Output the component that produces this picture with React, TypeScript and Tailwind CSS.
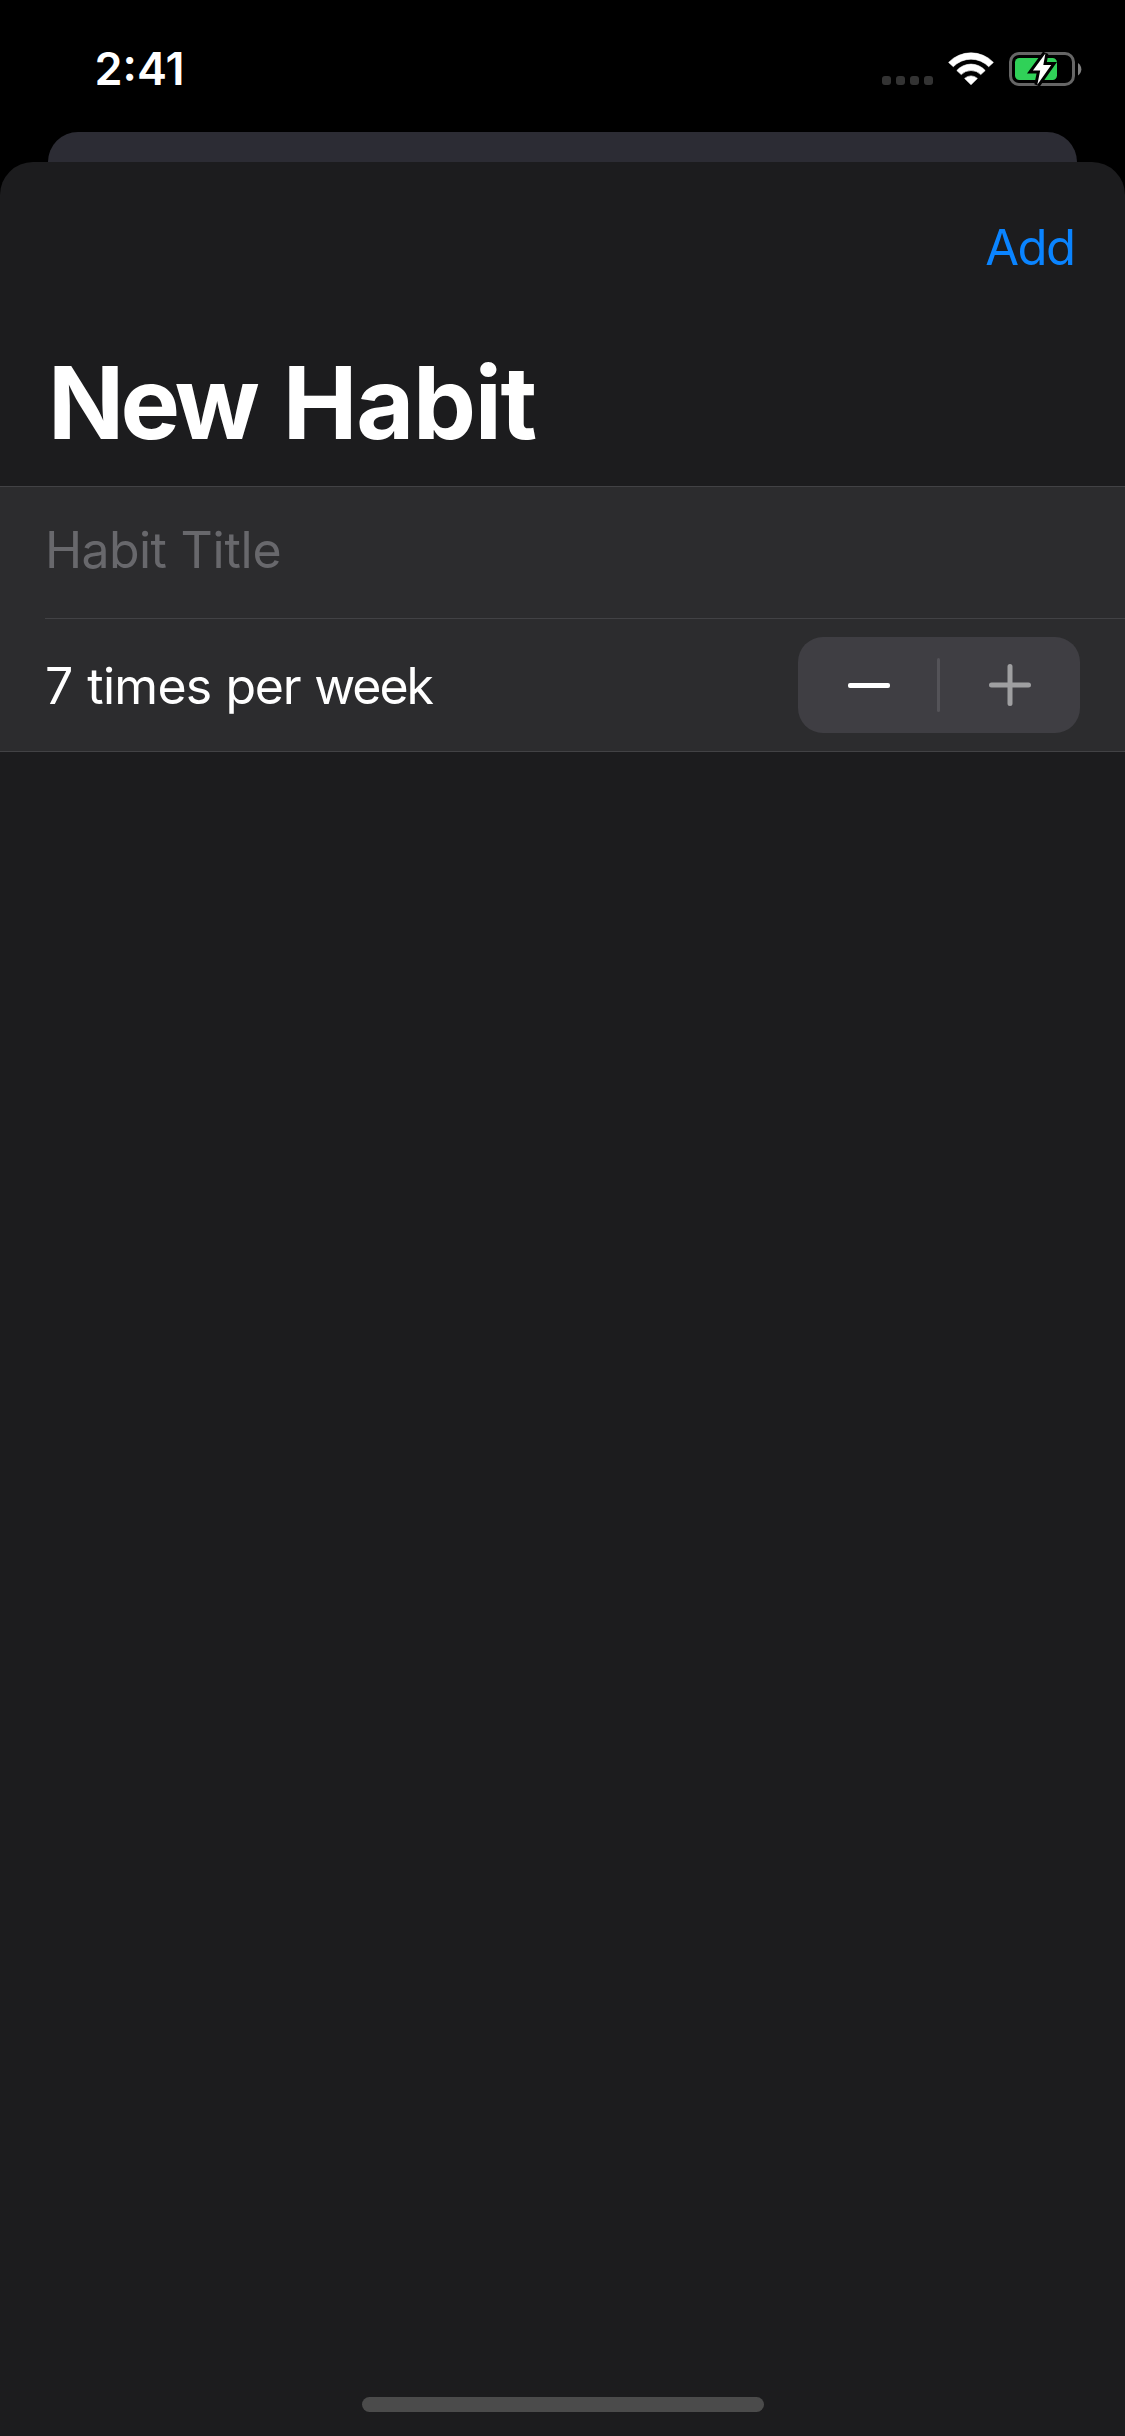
function SignalDots() {
  return (
    <div className="mt-[76px] flex gap-[5px]">
      {[0, 1, 2, 3].map((dot) => (
        <span key={dot} className="size-[9px] rounded-[3px] bg-[#333333]" />
      ))}
    </div>
  );
}

function WifiIcon() {
  return (
    <svg className="mt-[51px] ml-[14px]" width="48" height="36" viewBox="947 51 48 36" fill="white" stroke="white" strokeWidth="0.6" strokeLinejoin="round">
      <path d="M948.6 62.4A31 31 0 0 1 993.4 62.4L988.7 66.7A24.6 24.6 0 0 0 953.3 66.7Z" />
      <path d="M956.8 70.5A19 19 0 0 1 985.2 70.5L980.8 74.6A13.8 13.8 0 0 0 961.2 74.6Z" />
      <path d="M964.6 78.4A9.4 9.4 0 0 1 977.4 78.4L971 84.7Z" />
    </svg>
  );
}

function BatteryIcon() {
  const bolt = "M1045.4 53.5L1032.9 70.5H1040.2L1037.3 84.8L1051.2 65H1043.3Z";
  return (
    <svg className="mt-[50px] ml-[13px]" width="75" height="38" viewBox="1008 50 75 38">
      <rect x="1010.5" y="53.5" width="63" height="31" rx="8.5" fill="none" stroke="#666666" strokeWidth="3" />
      <path d="M1078 63V75.5A7.5 7.5 0 0 0 1078 63Z" fill="#808080" />
      <rect x="1015" y="58" width="42" height="22" rx="4.5" fill="#30d158" />
      <path d={bolt} fill="black" stroke="black" strokeWidth="6" />
      <path d={bolt} fill="white" />
    </svg>
  );
}

function StatusBar() {
  return (
    <header className="flex h-[132px] items-start pr-[42px] pl-[94.5px]">
      <time className="mt-[41px] text-[45px] leading-[55px] font-semibold">2:41</time>
      <div className="ml-auto flex items-start">
        <SignalDots />
        <WifiIcon />
        <BatteryIcon />
      </div>
    </header>
  );
}

function Stepper() {
  return (
    <div className="flex h-24 w-[282px] items-center rounded-[25px] bg-[#3f3e43]">
      <button aria-label="Decrease" className="flex h-full w-[139px] items-center justify-center pl-[3px]">
        <svg width="42" height="42" viewBox="0 0 42 42" fill="white">
          <rect y="19" width="42" height="5" rx="2" />
        </svg>
      </button>
      <span className="h-[54px] w-[3px] rounded-full bg-[#545358]" />
      <button aria-label="Increase" className="flex h-full w-[140px] items-center justify-center">
        <svg width="42" height="42" viewBox="0 0 42 42" fill="#9f9fa1">
          <path d="M2.5 18.5H18.5V2.5A2.5 2.5 0 0 1 23.5 2.5V18.5H39.5A2.5 2.5 0 0 1 39.5 23.5H23.5V39.5A2.5 2.5 0 0 1 18.5 39.5V23.5H2.5A2.5 2.5 0 0 1 2.5 18.5Z" />
        </svg>
      </button>
    </div>
  );
}

export default function App() {
  return (
    <div className="flex h-[2436px] w-[1125px] flex-col bg-black font-['Inter',sans-serif] text-white">
      <StatusBar />
      <div className="mx-12 h-[30px] shrink-0 rounded-t-[30px] bg-[#2c2c34]" />
      <main className="flex flex-1 flex-col rounded-t-[33px] bg-[#1c1c1e]">
        <nav className="flex h-[180px] justify-end pt-[56px] pr-[50.5px]">
          <button className="h-[60px] text-[49px] leading-[60px] tracking-[-1.5px] text-[#0a84ff]">Add</button>
        </nav>
        <h1 className="mb-[23px] pl-12 text-[100px] leading-[121px] font-bold">
          <span className="mr-[3px] tracking-[-3.8px]">New</span> <span className="tracking-[-1.3px]">Habit</span>
        </h1>
        <section className="border-y border-[#424245] bg-[#2c2c2e]">
          <div className="h-[131px] pt-[33px] pl-[45px]">
            <p className="text-[50px] leading-[60px] text-[#68686c]">
              <span className="tracking-[-0.6px]">Habit</span> <span className="tracking-[-0.2px]">Title</span>
            </p>
          </div>
          <div className="ml-[45px] flex h-[133px] items-start justify-between border-t border-[#424245] pr-[45px]">
            <p className="mt-[37px] text-[50px] leading-[60px]">
              7 <span className="tracking-[-0.75px]">times</span> <span className="tracking-[-1.3px]">per</span>{' '}
              <span className="tracking-[-2px]">week</span>
            </p>
            <div className="mt-[18px]">
              <Stepper />
            </div>
          </div>
        </section>
        <div className="mx-auto mt-auto mb-6 h-[15px] w-[402px] rounded-full bg-[#4b4b4b]" />
      </main>
    </div>
  );
}
